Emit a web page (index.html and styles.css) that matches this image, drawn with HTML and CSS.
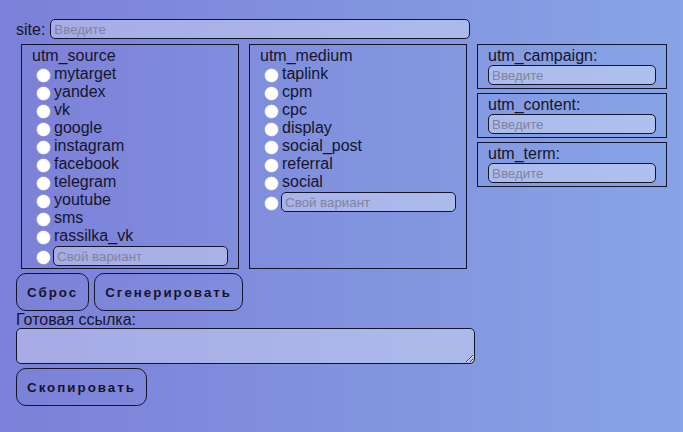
FILE: index.html
```html
<!DOCTYPE html>
<html lang="ru">
<head>
    <meta charset="UTF-8">
    <meta name="viewport" content="width=device-width, initial-scale=1.0">
    <title>UTM генератор</title>
    <link rel="stylesheet" href="styles.css">
</head>
<body>
    <div class="site-row">
        <label for="site">site:</label>
        <input type="text" id="site" class="site-input" placeholder="Введите">
    </div>

    <div class="params">
        <div class="box list-box">
            <div class="box-title">utm_source</div>
            <label class="option"><input type="radio" name="source" value="mytarget"> mytarget</label>
            <label class="option"><input type="radio" name="source" value="yandex"> yandex</label>
            <label class="option"><input type="radio" name="source" value="vk"> vk</label>
            <label class="option"><input type="radio" name="source" value="google"> google</label>
            <label class="option"><input type="radio" name="source" value="instagram"> instagram</label>
            <label class="option"><input type="radio" name="source" value="facebook"> facebook</label>
            <label class="option"><input type="radio" name="source" value="telegram"> telegram</label>
            <label class="option"><input type="radio" name="source" value="youtube"> youtube</label>
            <label class="option"><input type="radio" name="source" value="sms"> sms</label>
            <label class="option"><input type="radio" name="source" value="rassilka_vk"> rassilka_vk</label>
            <div class="option custom">
                <input type="radio" name="source" value="custom">
                <input type="text" class="custom-input" placeholder="Свой вариант">
            </div>
        </div>

        <div class="box list-box">
            <div class="box-title">utm_medium</div>
            <label class="option"><input type="radio" name="medium" value="taplink"> taplink</label>
            <label class="option"><input type="radio" name="medium" value="cpm"> cpm</label>
            <label class="option"><input type="radio" name="medium" value="cpc"> cpc</label>
            <label class="option"><input type="radio" name="medium" value="display"> display</label>
            <label class="option"><input type="radio" name="medium" value="social_post"> social_post</label>
            <label class="option"><input type="radio" name="medium" value="referral"> referral</label>
            <label class="option"><input type="radio" name="medium" value="social"> social</label>
            <div class="option custom">
                <input type="radio" name="medium" value="custom">
                <input type="text" class="custom-input" placeholder="Свой вариант">
            </div>
        </div>

        <div class="side">
            <div class="box field-box">
                <div class="box-title">utm_campaign:</div>
                <input type="text" class="field-input" placeholder="Введите">
            </div>
            <div class="box field-box">
                <div class="box-title">utm_content:</div>
                <input type="text" class="field-input" placeholder="Введите">
            </div>
            <div class="box field-box">
                <div class="box-title">utm_term:</div>
                <input type="text" class="field-input" placeholder="Введите">
            </div>
        </div>
    </div>

    <div class="actions">
        <button class="btn" id="resetButton">Сброс</button>
        <button class="btn" id="generateButton">Сгенерировать</button>
    </div>

    <div class="result-label">Готовая ссылка:</div>
    <textarea id="result" class="result"></textarea>

    <div class="actions">
        <button class="btn" id="copyButton">Скопировать</button>
    </div>
</body>
</html>
```

FILE: styles.css
```css
body {
    font-family: "Liberation Sans", Arial, sans-serif;
    font-size: 16px;
    color: #15152a;
    background: linear-gradient(90deg, #7c80d8, #87a4e6);
    margin: 0;
    padding: 19px 16px;
    min-height: 432px;
    box-sizing: border-box;
}
input[type="text"],
textarea {
    font-family: "Liberation Sans", Arial, sans-serif;
    font-size: 13.33px;
    color: #15152a;
    background: rgba(255, 255, 255, 0.33);
    border: 1px solid #15152a;
    border-radius: 5px;
    box-sizing: border-box;
    padding: 0 3px;
    outline: none;
}
input::placeholder {
    color: #80839e;
}
.site-row {
    display: flex;
    align-items: center;
    gap: 5px;
    height: 20px;
    line-height: 20px;
}
.site-row label {
    padding-top: 1px;
}
.site-input {
    width: 420px;
    height: 20px;
}
.params {
    display: flex;
    align-items: flex-start;
    gap: 10px;
    margin: 5px 0 0 5px;
}
.box {
    border: 1px solid #15152a;
    box-sizing: border-box;
    padding: 2px 10px;
}
.box-title {
    line-height: 18px;
}
.list-box {
    width: 218px;
    align-self: stretch;
}
.option {
    display: flex;
    align-items: center;
    line-height: 18px;
    height: 18px;
}
.option input[type="radio"] {
    appearance: none;
    width: 13px;
    height: 13px;
    margin: 2px 4px 0 5px;
    border-radius: 50%;
    background: #fff;
    box-shadow: 0 0 0 0.5px #c8c8d8;
    flex-shrink: 0;
}
.option.custom {
    height: 21px;
    align-items: flex-end;
}
.option.custom input[type="radio"] {
    margin: 0 3px 2px 5px;
}
.custom-input {
    flex: 1;
    width: 0;
    min-width: 0;
    height: 20px;
}
.side {
    display: flex;
    flex-direction: column;
    gap: 4px;
}
.field-box {
    width: 190px;
    height: 45px;
}
.field-input {
    display: block;
    width: 100%;
    height: 20px;
}
.actions {
    display: flex;
    gap: 5px;
    margin-top: 4px;
}
.btn {
    font-family: "Liberation Sans", Arial, sans-serif;
    font-size: 13.33px;
    font-weight: bold;
    letter-spacing: 2px;
    color: #15152a;
    background: transparent;
    border: 1px solid #15152a;
    border-radius: 10px;
    height: 38px;
    padding: 0 10px;
    cursor: pointer;
}
.result-label {
    line-height: 17px;
}
.result {
    display: block;
    width: 459px;
    height: 36px;
    resize: vertical;
}
```
